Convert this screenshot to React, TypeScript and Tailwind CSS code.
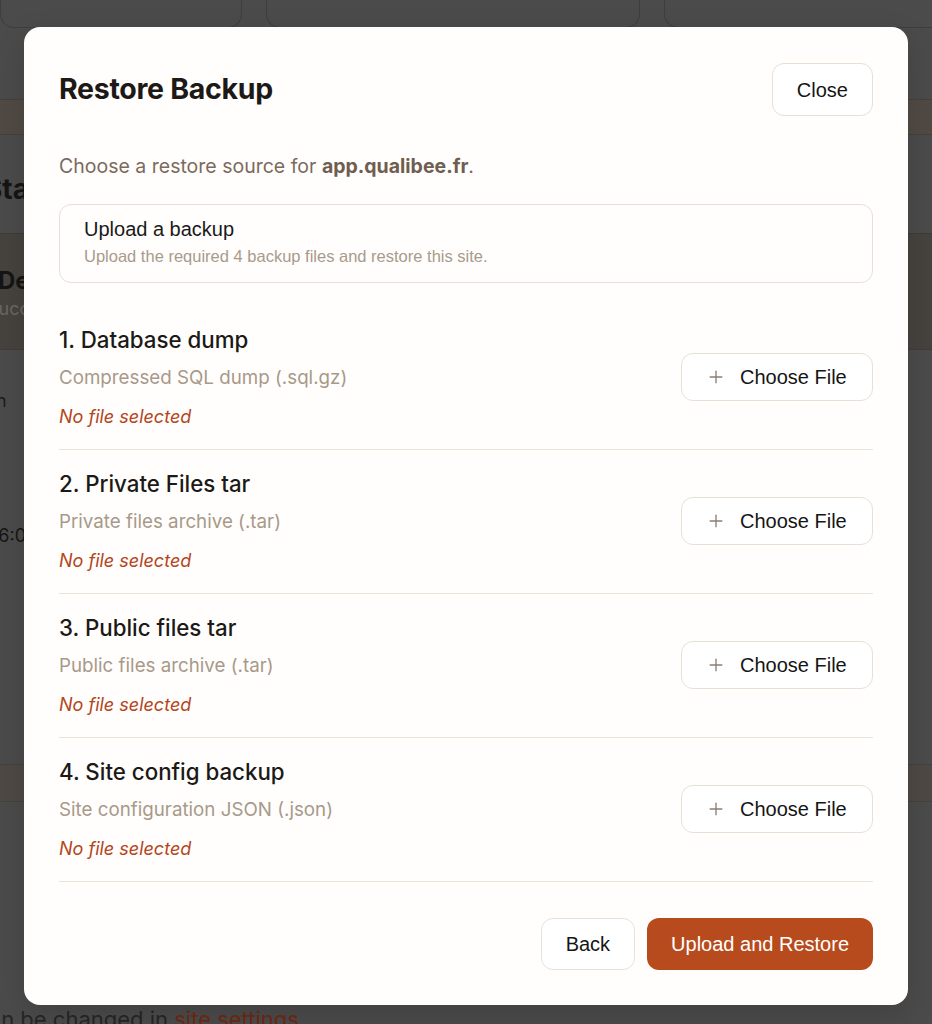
import { Plus } from 'lucide-react'

const sections = [
  { title: '1. Database dump', hint: 'Compressed SQL dump (.sql.gz)' },
  { title: '2. Private Files tar', hint: 'Private files archive (.tar)' },
  { title: '3. Public files tar', hint: 'Public files archive (.tar)' },
  { title: '4. Site config backup', hint: 'Site configuration JSON (.json)' },
]

function BackgroundPage() {
  return (
    <div className="flex flex-col font-['Inter',sans-serif]">
      {/* top cards */}
      <div className="flex h-[28px] gap-6">
        <div className="w-[242px] rounded-b-[14px] border border-t-0 border-[#3e3e3e]" />
        <div className="w-[374px] rounded-b-[14px] border border-t-0 border-[#3e3e3e]" />
        <div className="flex-1 rounded-bl-[14px] border border-t-0 border-r-0 border-[#3e3e3e]" />
      </div>
      <div className="mt-[71px] h-[36px] border-y border-[#45403b] bg-[#514a44]" />
      <div className="flex h-[98px] items-center pt-[10px]">
        <span className="ml-[-16px] text-[28px] font-bold text-[#151515]">Status</span>
      </div>
      <div className="flex h-[117px] flex-col justify-center border-y border-[#3f3c38] bg-[#46433f] pt-[4px]">
        <span className="ml-[-2px] text-[24px] leading-[30px] font-bold text-[#151515]">Deployment</span>
        <span className="ml-[-13px] text-[18px] leading-[26px] text-[#6a6762]">Successful deployment</span>
      </div>
      <div className="flex h-[100px] items-center">
        <span className="ml-[-52px] text-[18px] text-[#1c1c1c]">Region</span>
      </div>
      <div className="flex h-[170px] items-center">
        <span className="ml-[-9px] text-[18px] text-[#161616]">16:04</span>
      </div>
      <div className="mt-[144px] h-[38px] border-y border-[#45413d] bg-[#4e4944]" />
      <div className="mt-[203px] whitespace-nowrap text-[22px] leading-[28px] text-[#262626]">
        <span className="ml-[-24px]">can be changed in </span>
        <span className="text-[#6e2913]">site settings</span>.
      </div>
    </div>
  )
}

export default function App() {
  return (
    <div className="relative h-[1024px] w-[932px] overflow-hidden bg-[#4b4b4b]">
      <BackgroundPage />

      {/* Modal */}
      <div className="absolute inset-0 flex items-start justify-center pt-[27px]">
        <div className="flex w-[884px] flex-col rounded-[16px] bg-[#fffefc] px-[35px] pt-9 pb-[35px] shadow-[0_10px_30px_rgba(0,0,0,0.15)]">
          <header className="flex items-center justify-between">
            <h1 className="font-['Inter',sans-serif] text-[28.5px] font-bold tracking-[-0.3px] text-[#1c1917]">
              Restore Backup
            </h1>
            <button className="h-[53px] rounded-xl border border-[#e6e0d6] bg-white px-6 font-['Liberation_Sans',Arial,sans-serif] text-[20px] text-[#151515]">
              Close
            </button>
          </header>

          <p className="mt-[36px] font-['Inter',sans-serif] text-[19.5px] leading-[28px] text-[#7b6a5d]">
            Choose a restore source for <span className="font-bold text-[#6f5d50]">app.qualibee.fr</span>.
          </p>

          <div className="mt-[24px] rounded-xl border border-[#e6e0d6] px-6 pt-[12px] pb-[16px] font-['Liberation_Sans',Arial,sans-serif]">
            <div className="text-[20px] leading-[24px] text-[#1a1a1a]">Upload a backup</div>
            <div className="mt-[5px] text-[16.5px] leading-[20px] text-[#a89a8c]">
              Upload the required 4 backup files and restore this site.
            </div>
          </div>

          <div className="mt-[23px] flex flex-col">
            {sections.map((s) => (
              <div key={s.title} className="flex items-center justify-between border-b border-[#e9e3da] pt-[19px] pb-5">
                <div className="flex flex-col font-['Inter',sans-serif]">
                  <h3 className="text-[22.3px] leading-[30px] font-medium text-[#1c1917]">{s.title}</h3>
                  <p className="mt-[10px] text-[18.75px] leading-[26px] text-[#a8998a]">{s.hint}</p>
                  <p className="mt-[14px] text-[18px] leading-6 italic text-[#b5441b]">No file selected</p>
                </div>
                <button className="flex h-[48px] w-[192px] items-center gap-[14px] rounded-xl border border-[#e6e0d6] bg-white pl-[24px] font-['Liberation_Sans',Arial,sans-serif] text-[20px] text-[#151515]">
                  <Plus size={20} strokeWidth={1.6} className="text-[#8c7f72]" />
                  Choose File
                </button>
              </div>
            ))}
          </div>

          <footer className="flex justify-end gap-3 pt-9 font-['Liberation_Sans',Arial,sans-serif] text-[20px]">
            <button className="h-[52px] rounded-xl border border-[#e6e0d6] bg-white px-6 text-[#151515]">Back</button>
            <button className="h-[52px] rounded-xl bg-[#b84b1d] px-6 text-white">Upload and Restore</button>
          </footer>
        </div>
      </div>
    </div>
  )
}
